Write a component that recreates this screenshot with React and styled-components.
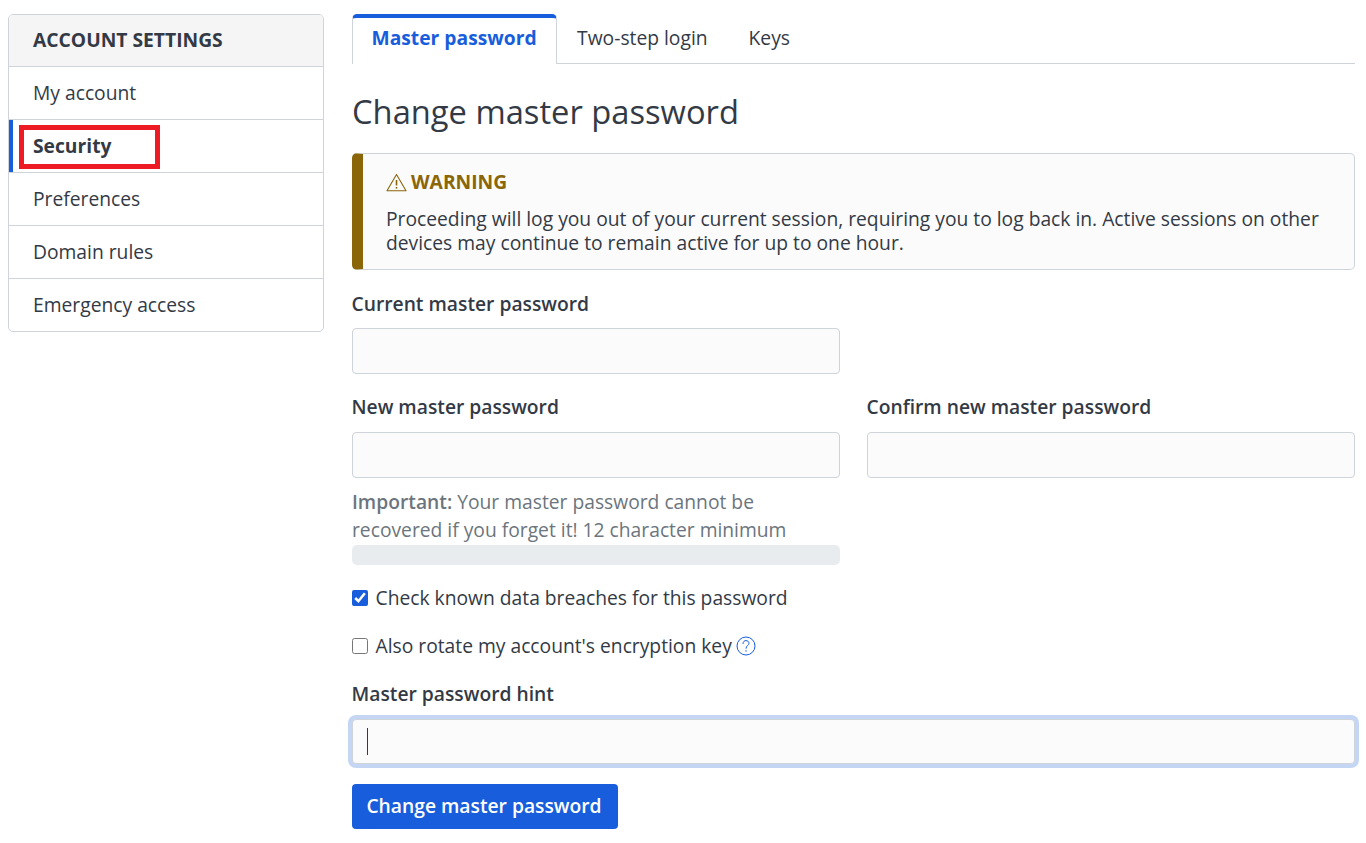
import React from "react";
import styled, { createGlobalStyle } from "styled-components";

const Global = createGlobalStyle`
  html, body { margin: 0; padding: 0; background: #fff; }
  body { font-family: "Open Sans", "Noto Sans", sans-serif; font-size: 19.25px; line-height: 1.5; color: #333a45; }
  * { box-sizing: border-box; }
`;

const Page = styled.div`
  display: grid;
  grid-template-columns: 316px 1003px;
  column-gap: 28px;
  padding: 14px 11px 14px 8px;
  align-items: start;
`;

const Side = styled.nav`
  border: 1px solid #ced4da;
  border-radius: 5px;
  overflow: hidden;
`;

const SideHead = styled.div`
  height: 51px;
  padding: 0 24px;
  display: flex;
  align-items: center;
  background: #f5f5f5;
  font-weight: 700;
  text-transform: uppercase;
`;

const SideItem = styled.a`
  display: flex;
  align-items: center;
  height: 53px;
  padding: 0 24px;
  border-top: 1px solid #ced4da;
  position: relative;
  font-weight: ${(p) => (p.$active ? 700 : 400)};
  &::before {
    content: "";
    display: ${(p) => (p.$active ? "block" : "none")};
    position: absolute;
    left: 0;
    top: 0;
    bottom: 0;
    width: 4px;
    background: #175ddc;
  }
`;

const Highlight = styled.span`
  position: absolute;
  left: 10px;
  top: 5px;
  width: 141px;
  height: 44px;
  border: 5px solid #ed1c24;
`;

const Main = styled.main`
  min-width: 0;
`;

const Tabs = styled.div`
  display: flex;
  height: 50px;
  border-bottom: 1px solid #ced4da;
`;

const Tab = styled.a`
  height: 50px;
  padding: ${(p) => (p.$active ? "6px 19px 0 18.5px" : "10px 20.5px 0 20.5px")};
  font-weight: ${(p) => (p.$active ? 700 : 400)};
  color: ${(p) => (p.$active ? "#175ddc" : "#333a45")};
  background: ${(p) => (p.$active ? "#fff" : "transparent")};
  border: ${(p) => (p.$active ? "1px solid #ced4da" : "0")};
  border-top: ${(p) => (p.$active ? "4px solid #175ddc" : "0")};
  border-bottom: 0;
  border-radius: ${(p) => (p.$active ? "5px 5px 0 0" : "0")};
  position: relative;
  z-index: 1;
`;

const Title = styled.h1`
  margin: 24px 0 17px;
  font-size: 32.7px;
  font-weight: 400;
  line-height: 48px;
`;

const Callout = styled.div`
  height: 117px;
  border: 1px solid #ced4da;
  border-left: 11px solid #8b6609;
  border-radius: 5px;
  background: #fbfbfb;
  padding: 13px 23px 0;
  line-height: 24px;
`;

const CalloutTitle = styled.div`
  display: flex;
  align-items: center;
  gap: 4px;
  color: #8b6609;
  font-weight: 700;
  height: 30px;
  margin-bottom: 10px;
`;

const Row = styled.div`
  display: grid;
  grid-template-columns: 488px 488px;
  column-gap: 27px;
`;

const Field = styled.div`
  display: flex;
  flex-direction: column;
  position: relative;
`;

const Label = styled.label`
  display: block;
  font-weight: 600;
  height: 28px;
  line-height: 28px;
  margin-left: -0.5px;
  margin-bottom: ${(p) => p.$gap || 10}px;
`;

const Input = styled.input`
  display: block;
  width: 100%;
  height: 46px;
  border: 1px solid #ced4da;
  border-radius: 4px;
  background: #fbfbfb;
  outline: none;
  font: inherit;
  ${(p) => p.$focus && "box-shadow: 0 0 0 4px #c5d6f5; height: 45px;"}
`;

const Caret = styled.span`
  position: absolute;
  left: 15px;
  bottom: 9px;
  width: 1px;
  height: 27px;
  background: #333a45;
`;

const Help = styled.div`
  color: #6c757d;
  line-height: 28px;
  margin-top: 10px;
`;

const HelpStrong = styled.span`
  font-weight: 600;
`;

const Meter = styled.div`
  height: 20px;
  border-radius: 5px;
  background: #e9ecef;
  margin-top: 1px;
`;

const Check = styled.label`
  display: flex;
  align-items: center;
  height: 28px;
  gap: 7.5px;
`;

const Box = styled.input`
  width: 16px;
  height: 16px;
  margin: 0;
  flex: none;
  accent-color: #175ddc;
`;

const HelpIcon = styled.svg`
  margin-left: -3.5px;
`;

const Button = styled.button`
  display: block;
  height: 45px;
  width: 266px;
  padding: 0 2px 0 0;
  border: 0;
  border-radius: 4px;
  background: #175ddc;
  color: #fff;
  font: inherit;
  font-weight: 600;
`;

const Stack = styled.div`
  padding-top: ${(p) => p.$top}px;
`;

const Warn = () => (
  <svg width="21" height="19" viewBox="0 0 21 19" fill="none" stroke="#8b6609" strokeWidth="1.1" strokeLinejoin="round">
    <path d="M10.5 1.5 L20 17.8 H1 Z" />
    <path d="M10.5 7 V12.5" strokeWidth="1.6" />
    <path d="M10.5 14 V15.6" strokeWidth="1.6" />
  </svg>
);

const Question = () => (
  <HelpIcon width="20" height="20" viewBox="0 0 20 20" fill="none" stroke="#175ddc" strokeWidth="1">
    <circle cx="10" cy="10" r="9" />
    <path d="M7 7.6 C7 5.6 8.4 4.6 10 4.6 C11.7 4.6 13 5.7 13 7.3 C13 9.4 10 9.6 10 12.3" strokeLinecap="round" />
    <path d="M10 14.3 V15.5" strokeWidth="1.2" />
  </HelpIcon>
);

const items = ["Security", "Preferences", "Domain rules", "Emergency access"];

function PasswordForm() {
  return (
    <>
      <Stack $top={20}>
        <Row>
          <Field>
            <Label>Current master password</Label>
            <Input type="password" />
          </Field>
        </Row>
      </Stack>
      <Stack $top={19}>
        <Row>
          <Field>
            <Label $gap={11}>New master password</Label>
            <Input type="password" />
            <Help>
              <HelpStrong>Important:</HelpStrong> Your master password cannot be recovered if you forget it! 12 character minimum
            </Help>
            <Meter />
          </Field>
          <Field>
            <Label $gap={11}>Confirm new master password</Label>
            <Input type="password" />
          </Field>
        </Row>
      </Stack>
      <Stack $top={19}>
        <Check>
          <Box type="checkbox" defaultChecked />
          Check known data breaches for this password
        </Check>
      </Stack>
      <Stack $top={20}>
        <Check>
          <Box type="checkbox" />
          <span>Also rotate my account's encryption key</span>
          <Question />
        </Check>
      </Stack>
      <Stack $top={20}>
        <Field>
          <Label $gap={11}>Master password hint</Label>
          <Input $focus type="text" />
          <Caret />
        </Field>
      </Stack>
      <Stack $top={20}>
        <Button>Change master password</Button>
      </Stack>
    </>
  );
}

export default function App() {
  return (
    <>
      <Global />
      <Page>
        <Side>
          <SideHead>Account Settings</SideHead>
          <SideItem>My account</SideItem>
          {items.map((t, i) => (
            <SideItem key={t} $active={i === 0}>
              {t}
              {i === 0 && <Highlight />}
            </SideItem>
          ))}
        </Side>
        <Main>
          <Tabs>
            <Tab $active>Master password</Tab>
            <Tab>Two-step login</Tab>
            <Tab>Keys</Tab>
          </Tabs>
          <Title>Change master password</Title>
          <Callout>
            <CalloutTitle>
              <Warn />
              WARNING
            </CalloutTitle>
            Proceeding will log you out of your current session, requiring you to log back in. Active sessions on other devices may continue to remain active for up to one hour.
          </Callout>
          <PasswordForm />
        </Main>
      </Page>
    </>
  );
}
